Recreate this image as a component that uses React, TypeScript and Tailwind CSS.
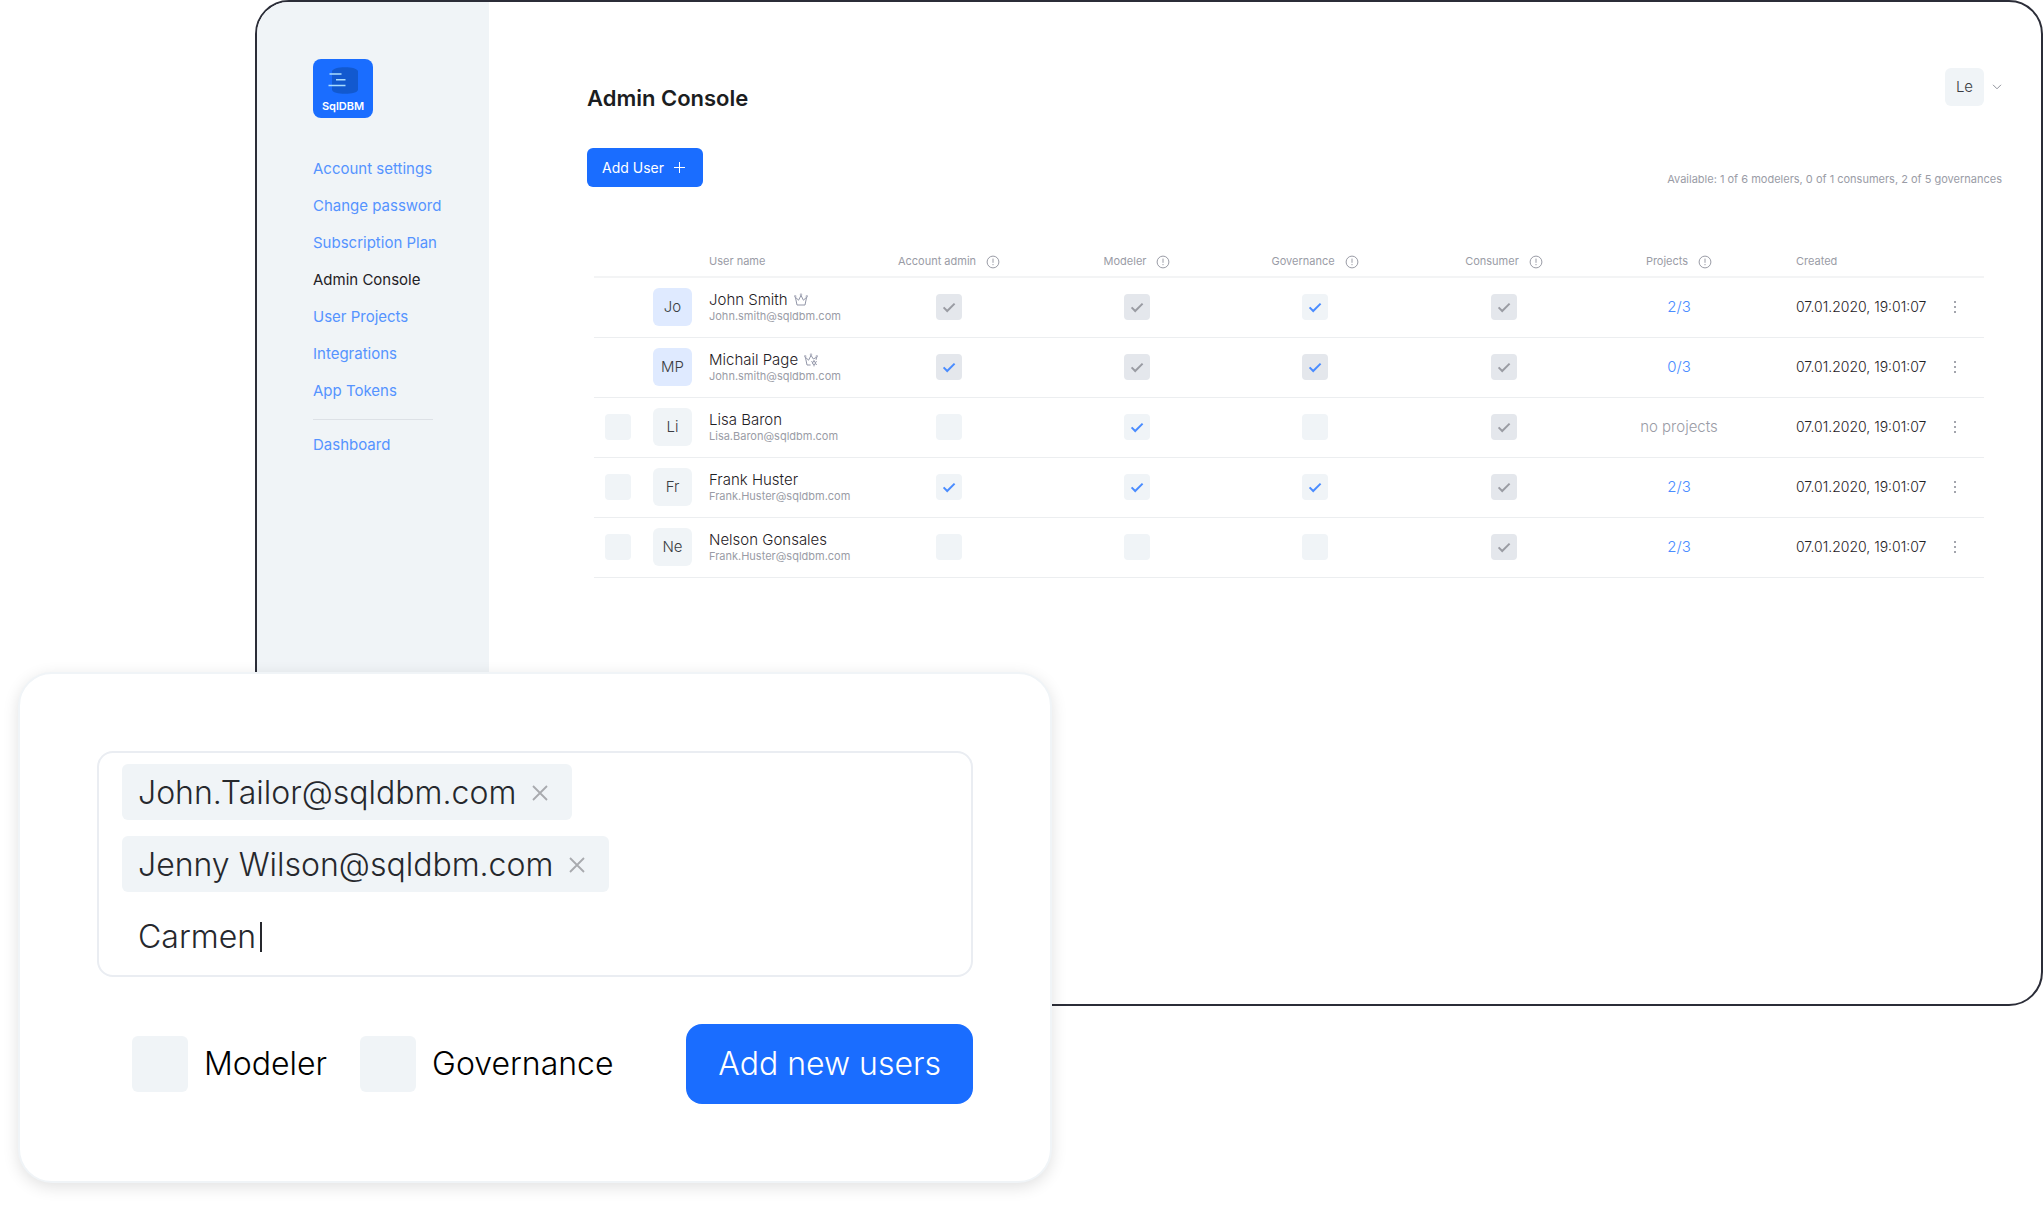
import React from "react";

type CheckTone = "off" | "on" | "locked" | "lockedOn";

type User = {
  initials: string;
  name: string;
  email: string;
  crown?: "owner" | "coOwner";
  selectable: boolean;
  roles: [CheckTone, CheckTone, CheckTone, CheckTone];
  projects: string | null;
  created: string;
};

const navItems = [
  "Account settings",
  "Change password",
  "Subscription Plan",
  "Admin Console",
  "User Projects",
  "Integrations",
  "App Tokens",
];

const roleNames = ["Account admin", "Modeler", "Governance", "Consumer"];

const users: User[] = [
  { initials: "Jo", name: "John Smith", email: "John.smith@sqldbm.com", crown: "owner", selectable: false, roles: ["locked", "locked", "on", "locked"], projects: "2/3", created: "07.01.2020, 19:01:07" },
  { initials: "MP", name: "Michail Page", email: "John.smith@sqldbm.com", crown: "coOwner", selectable: false, roles: ["lockedOn", "locked", "lockedOn", "locked"], projects: "0/3", created: "07.01.2020, 19:01:07" },
  { initials: "Li", name: "Lisa Baron", email: "Lisa.Baron@sqldbm.com", selectable: true, roles: ["off", "on", "off", "locked"], projects: null, created: "07.01.2020, 19:01:07" },
  { initials: "Fr", name: "Frank Huster", email: "Frank.Huster@sqldbm.com", selectable: true, roles: ["on", "on", "on", "locked"], projects: "2/3", created: "07.01.2020, 19:01:07" },
  { initials: "Ne", name: "Nelson Gonsales", email: "Frank.Huster@sqldbm.com", selectable: true, roles: ["off", "off", "off", "locked"], projects: "2/3", created: "07.01.2020, 19:01:07" },
];

const boxTone: Record<CheckTone, string> = {
  off: "bg-[#f0f4f7]",
  on: "bg-[#f0f4f7]",
  locked: "bg-[#e4e7ec]",
  lockedOn: "bg-[#e4e7ec]",
};

const markTone: Record<CheckTone, string> = {
  off: "hidden",
  on: "text-[#4a8cff]",
  locked: "text-[#9a9ca3]",
  lockedOn: "text-[#4a8cff]",
};

function CheckBox({ tone, label }: { tone: CheckTone; label: string }) {
  return (
    <span className="inline-grid place-items-center align-middle">
      <input
        type="checkbox"
        aria-label={label}
        defaultChecked={tone !== "off"}
        className={`col-start-1 row-start-1 size-[26px] appearance-none rounded ${boxTone[tone]}`}
      />
      <svg
        viewBox="0 0 14 11"
        className={`pointer-events-none col-start-1 row-start-1 h-[11px] w-[14px] ${markTone[tone]}`}
        fill="none"
        stroke="currentColor"
        strokeWidth="2"
        aria-hidden="true"
      >
        <path d="M1.6 5.4 5.2 9 12.6 1.6" />
      </svg>
    </span>
  );
}

function InfoIcon() {
  return (
    <svg viewBox="0 0 14 14" className="size-[14px] shrink-0" fill="none" stroke="#9a9ca6" aria-hidden="true">
      <circle cx="7" cy="7" r="5.9" />
      <path d="M7 3.6v4.2M7 9v1.2" />
    </svg>
  );
}

function Crown({ kind }: { kind: "owner" | "coOwner" }) {
  return (
    <svg viewBox="0 0 14 14" className="size-[14px]" fill="none" stroke="#9296a8" aria-hidden="true">
      {kind === "owner" ? (
        <path d="M3 12 1.4 4.200 4.600 7.200 7 2.400 9.400 7.200l3.200-3L11 12Z" />
      ) : (
        <path d="M6.600 12H3L1.400 4.200 4.600 7.200 7 2.400 9.400 6l3.200-1.800-.5 2.600" />
      )}
      <path d="M.5 2.600h1.400V4H.5zM6.300.9h1.400v1.400H6.300zM12.100 2.600h1.400V4h-1.400z" strokeWidth="0.6" />
      {kind === "coOwner" && (
        <>
          <circle cx="10" cy="10" r="1.500" />
          <path d="M10 7v1.500M10 11.500v1.900M7.300 8.500l1.400.8M11.400 10.800l1.500.8M12.800 8.500l-1.400.8" />
        </>
      )}
    </svg>
  );
}

function Logo() {
  return (
    <a href="#home" aria-label="SqlDBM" className="flex h-[59px] w-[60px] flex-col items-center rounded-lg bg-[#1a6dff] pt-[7px]">
      <svg viewBox="0 0 30 29" className="h-[29px] w-[30px]" fill="none" aria-hidden="true">
        <path d="M4 5.500C4 -.3 30 -.3 30 5.500V23.500C30 29.300 4 29.300 4 23.500Z" fill="#1259cf" />
        <path d="M1.500 8h12M8 13.700h9.500M.5 19.500h17" stroke="#a9ddff" strokeWidth="1.600" />
      </svg>
      <span className="text-[11px] leading-[22px] font-semibold text-white">SqlDBM</span>
    </a>
  );
}

function Sidebar() {
  return (
    <aside className="w-[232px] shrink-0 bg-[#f0f4f7] px-14 pt-[57px]">
      <Logo />
      <nav className="mt-[39px] flex flex-col gap-[13px] text-[15px] leading-6 font-normal whitespace-nowrap">
        {navItems.map((item) => (
          <a
            key={item}
            href="#section"
            className={item === "Admin Console" ? "text-[#1f2125]" : "text-[#5593ff]"}
          >
            {item}
          </a>
        ))}
        <hr className="mt-[3px] border-[#dde1e6]" />
        <a href="#dashboard" className="text-[#5593ff]">
          Dashboard
        </a>
      </nav>
    </aside>
  );
}

function UserTable() {
  return (
    <table className="w-full table-fixed border-collapse">
      <colgroup>
        <col className="w-[59px]" />
        <col className="w-[56px]" />
        <col className="w-[152px]" />
        <col className="w-[176px]" />
        <col className="w-[200px]" />
        <col className="w-[156px]" />
        <col className="w-[222px]" />
        <col className="w-[128px]" />
        <col className="w-[183px]" />
        <col className="w-[58px]" />
      </colgroup>
      <thead>
        <tr className="h-[30px] border-b-2 border-[#f3f4f5] text-[11px] text-[#9a9ca6]">
          <td />
          <td />
          <th className="text-left font-normal">User name</th>
          {[...roleNames, "Projects"].map((name) => (
            <th key={name} className="font-normal">
              <span className="flex items-center justify-center gap-2.5">
                {name}
                <InfoIcon />
              </span>
            </th>
          ))}
          <th className="pl-[53px] text-left font-normal">Created</th>
          <td />
        </tr>
      </thead>
      <tbody>
        {users.map((user) => (
          <tr key={user.name} className="h-[60px] border-b border-[#eceef0] text-[15px]">
            <td className="pl-[11px]">
              {user.selectable && <CheckBox tone="off" label={`Select ${user.name}`} />}
            </td>
            <td>
              <span
                className={`flex h-[38px] w-[39px] items-center justify-center rounded-md text-[#3b3d42] ${
                  user.selectable ? "bg-[#f0f4f7]" : "bg-[#dfeaff]"
                }`}
              >
                {user.initials}
              </span>
            </td>
            <td className="whitespace-nowrap">
              <span className="flex items-center gap-1.5 leading-[18px] text-[#1f2125]">
                {user.name}
                {user.crown && <Crown kind={user.crown} />}
              </span>
              <span className="block text-[11px] leading-[14px] font-normal text-[#9a9ca6]">{user.email}</span>
            </td>
            {user.roles.map((tone, i) => (
              <td key={roleNames[i]} className="text-center">
                <CheckBox tone={tone} label={`${user.name}: ${roleNames[i]}`} />
              </td>
            ))}
            <td className="text-center whitespace-nowrap">
              {user.projects ? (
                <a href="#projects" className="text-[#4a8cff]">
                  {user.projects}
                </a>
              ) : (
                <span className="text-[#9a9ca6]">no projects</span>
              )}
            </td>
            <td className="pl-[53px] text-sm whitespace-nowrap text-[#1f2125]">{user.created}</td>
            <td>
              <button type="button" aria-label={`Actions for ${user.name}`} className="mx-auto flex h-6 w-4 items-center justify-center">
                <svg viewBox="0 0 2 12" className="h-3 w-0.5" fill="#a3a5ad" aria-hidden="true">
                  <path d="M0 0h2v2H0zM0 5h2v2H0zM0 10h2v2H0z" />
                </svg>
              </button>
            </td>
          </tr>
        ))}
      </tbody>
    </table>
  );
}

function Console() {
  return (
    <main className="min-w-0 flex-1 pt-[66px] pr-[39px] pl-[98px]">
      <header className="flex items-start justify-between">
        <h1 className="pt-3.5 text-[22px] leading-8 font-semibold text-[#1b1d21]">Admin Console</h1>
        <button type="button" className="flex items-center gap-2 text-[#3b3d42]">
          <span className="flex h-[38px] w-[39px] items-center justify-center rounded-md bg-[#f0f4f7] text-[15px]">Le</span>
          <svg viewBox="0 0 10 6" className="h-1.5 w-2.5" fill="none" stroke="#8f929b" aria-hidden="true">
            <path d="m1 .8 4 4 4-4" />
          </svg>
        </button>
      </header>
      <div className="mt-[34px] flex items-end justify-between">
        <button type="button" className="flex h-[39px] items-center gap-2.5 rounded-md bg-[#1a6dff] pr-[18px] pl-[15px] text-sm font-normal text-white">
          Add User
          <svg viewBox="0 0 11 11" className="size-[11px]" fill="none" stroke="currentColor" aria-hidden="true">
            <path d="M0 5.500h11M5.500 0v11" />
          </svg>
        </button>
        <p className="text-[11px] leading-4 font-normal text-[#9a9ca6]">
          Available: 1 of 6 modelers, 0 of 1 consumers, 2 of 5 governances
        </p>
      </div>
      <div className="mt-[60px] pr-[18px] pl-[7px]">
        <UserTable />
      </div>
    </main>
  );
}

function Chip({ email }: { email: string }) {
  return (
    <li className="flex h-14 items-center gap-4 rounded-md bg-[#f0f4f7] pt-0.5 pr-6 pl-4">
      {email}
      <button type="button" aria-label={`Remove ${email}`}>
        <svg viewBox="0 0 16 16" className="size-4" fill="none" stroke="#a8aaae" strokeWidth="1.800" aria-hidden="true">
          <path d="m1 1 14 14M15 1 1 15" />
        </svg>
      </button>
    </li>
  );
}

function AddUsersCard() {
  return (
    <form className="relative -mt-[334px] mb-[22px] ml-[18px] w-[1034px] rounded-[34px] border-2 border-[#f0f4f7] bg-white p-[77px] text-[32px] leading-10 shadow-[0_4px_16px_rgba(0,0,0,0.12)]">
      <div className="rounded-2xl border-2 border-[#eaedf2] px-[23px] py-[11px] text-[#26282d]">
        <ul className="flex flex-col items-start gap-4">
          <Chip email="John.Tailor@sqldbm.com" />
          <Chip email="Jenny Wilson@sqldbm.com" />
          <li className="flex h-14 items-center pt-0.5 pl-4">
            <input type="text" aria-label="New user" defaultValue="Carmen" className="field-sizing-content outline-none" />
            <span className="ml-1 h-[30px] w-0.5 bg-[#26282d]" />
          </li>
        </ul>
      </div>
      <div className="mt-[47px] flex h-20 items-center justify-between pl-[35px]">
        <div className="flex gap-[33px] text-black">
          {["Modeler", "Governance"].map((role) => (
            <label key={role} className="flex items-center gap-4">
              <input type="checkbox" className="size-14 appearance-none rounded-md bg-[#f0f4f7]" />
              {role}
            </label>
          ))}
        </div>
        <button type="submit" className="h-20 rounded-2xl bg-[#1a6dff] px-8 text-white">
          Add new users
        </button>
      </div>
    </form>
  );
}

export default function App() {
  return (
    <div className="overflow-hidden bg-white font-['Inter',sans-serif] font-light">
      <div className="mr-px ml-[255px] flex min-h-[1006px] overflow-hidden rounded-[34px] border-2 border-[#2b2d38]">
        <Sidebar />
        <Console />
      </div>
      <AddUsersCard />
    </div>
  );
}
